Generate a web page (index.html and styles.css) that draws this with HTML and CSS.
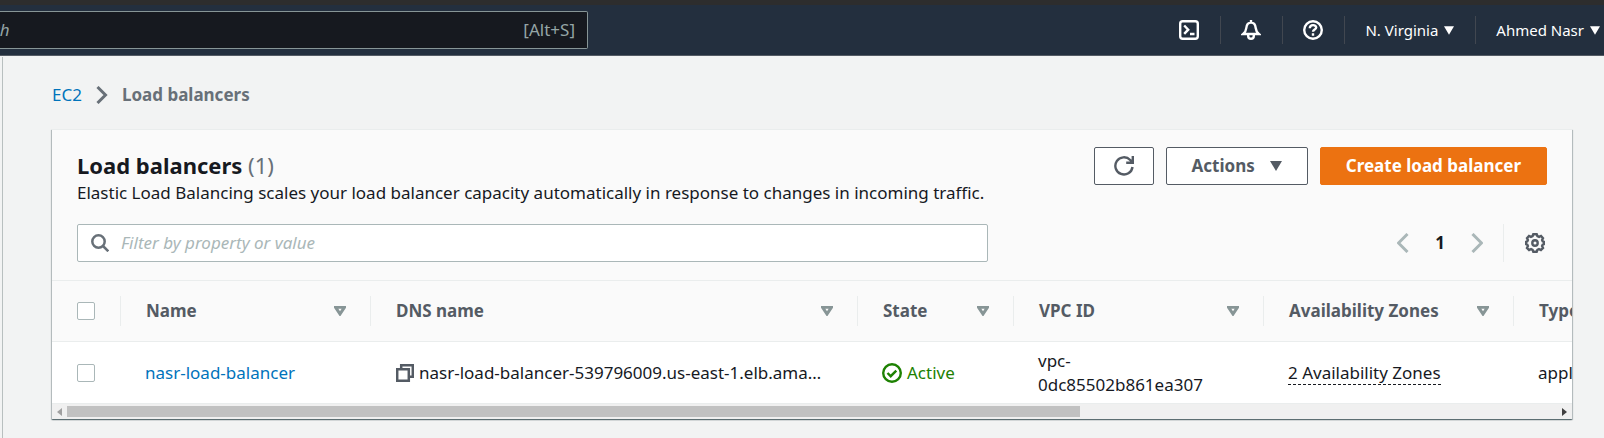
FILE: index.html
```html
<!DOCTYPE html>
<html lang="en">
<head>
<meta charset="utf-8">
<title>Load balancers</title>
<link rel="stylesheet" href="styles.css">
</head>
<body>
<header class="topnav">
  <div class="search">
    <input class="search-input" type="text" aria-label="Search" placeholder="Search">
    <span class="search-hint">[Alt+S]</span>
  </div>
  <nav class="tools" aria-label="Account">
    <button class="tool" type="button" aria-label="CloudShell">
      <svg class="icon bold" viewBox="0 0 20 20"><rect x="1.200" y="1.200" width="17.600" height="17.600" rx="2.500"/><path d="M5.200 5.500l4 4.200-4 4.200M11 14h4.500"/></svg>
    </button>
    <button class="tool" type="button" aria-label="Notifications">
      <svg class="icon bold" viewBox="0 0 20 20"><path d="M10 0v2M2.200 14h15.600c-2.200-1.800-2.800-3.300-3.100-6C14.400 4.800 13 2.600 10 2.600S5.600 4.800 5.300 8c-.3 2.700-.9 4.200-3.100 6zM7.200 15v1a2.800 2.800 0 0 0 5.600 0v-1"/></svg>
    </button>
    <button class="tool" type="button" aria-label="Help">
      <svg class="icon bold" viewBox="0 0 20 20"><circle cx="10" cy="10" r="8.800"/><path d="M6.800 8.200c0-4 6.400-4 6.400-.6 0 2-3.200 2-3.200 4.200M10 13.300v2.400"/></svg>
    </button>
    <button class="tool menu" type="button">N. Virginia <svg class="caret" viewBox="0 0 12 10"><path d="M0 0h12L6 10z"/></svg></button>
    <button class="tool menu last" type="button">Ahmed Nasr <svg class="caret" viewBox="0 0 12 10"><path d="M0 0h12L6 10z"/></svg></button>
  </nav>
</header>
<div class="shell">
  <aside class="rail"></aside>
  <main class="content">
    <nav class="crumbs" aria-label="Breadcrumbs">
      <a class="link" href="#">EC2</a>
      <svg class="crumb-sep" viewBox="0 0 12 18"><path d="M1.500 1l8 8-8 8"/></svg>
      <span class="crumb-current">Load balancers</span>
    </nav>
    <section class="panel">
      <div class="panel-head">
        <div class="title-row">
          <div class="heading">
            <h1 class="title">Load balancers <span class="count">(1)</span></h1>
            <p class="desc">Elastic Load Balancing scales your load balancer capacity automatically in response to changes in incoming traffic.</p>
          </div>
          <div class="actions">
            <button class="btn refresh" type="button" aria-label="Refresh"><svg class="icon bold" viewBox="0 0 20 20"><path d="M18.500 11a8.600 8.600 0 1 1-2.300-7l2.300 2.400M18.800 0v6.800h-6.600"/></svg></button>
            <button class="btn" type="button">Actions <svg class="caret" viewBox="0 0 12 10"><path d="M0 0h12L6 10z"/></svg></button>
            <button class="btn primary" type="button">Create load balancer</button>
          </div>
        </div>
        <div class="filter-row">
          <div class="filter">
            <svg class="icon small" viewBox="0 0 18 18"><circle cx="7.500" cy="7.500" r="6.200"/><path d="M12 12l5.300 5.300"/></svg>
            <input class="filter-input" type="text" aria-label="Filter" placeholder="Filter by property or value">
          </div>
          <div class="pager">
            <button class="page-arrow" type="button" aria-label="Previous page"><svg class="arrow" viewBox="0 0 12 20"><path d="M10.500 1l-9 9 9 9"/></svg></button>
            <button class="page" type="button">1</button>
            <button class="page-arrow" type="button" aria-label="Next page"><svg class="arrow" viewBox="0 0 12 20"><path d="M1.500 1l9 9-9 9"/></svg></button>
            <button class="settings" type="button" aria-label="Preferences"><svg class="icon bold" viewBox="0 0 20 20"><path d="M8.300 1.200h3.400l.7 1.800 1.700.8 1.900-.9 2 2.200-.9 1.900.6 1.300 1.100.5v2.400l-1.100.5-.6 1.400.9 1.900-2.100 2-1.900-.9-1.600.8-.7 1.900H8.300l-.7-1.900-1.600-.8-1.900.9-2.100-2 .9-1.900-.6-1.400-1.100-.5V8.800l1.100-.5.6-1.300L2 5.100l2-2.200 1.900.9L7.600 3z"/><circle cx="10" cy="10" r="2.700"/></svg></button>
          </div>
        </div>
      </div>
      <div class="table-wrap">
        <table class="table">
          <colgroup><col class="c-check"><col class="c-name"><col class="c-dns"><col class="c-state"><col class="c-vpc"><col class="c-az"><col class="c-type"></colgroup>
          <thead>
            <tr>
              <th><div class="th"><input class="check" type="checkbox" aria-label="Select all"></div></th>
              <th><div class="th">Name <svg class="sort" viewBox="0 0 12 10"><path d="M1.500 1.200h9L6 8z"/></svg></div></th>
              <th><div class="th">DNS name <svg class="sort" viewBox="0 0 12 10"><path d="M1.500 1.200h9L6 8z"/></svg></div></th>
              <th><div class="th">State <svg class="sort" viewBox="0 0 12 10"><path d="M1.500 1.200h9L6 8z"/></svg></div></th>
              <th><div class="th">VPC ID <svg class="sort" viewBox="0 0 12 10"><path d="M1.500 1.200h9L6 8z"/></svg></div></th>
              <th><div class="th">Availability Zones <svg class="sort" viewBox="0 0 12 10"><path d="M1.500 1.200h9L6 8z"/></svg></div></th>
              <th><div class="th">Type</div></th>
            </tr>
          </thead>
          <tbody>
            <tr>
              <td class="pick"><input class="check" type="checkbox" aria-label="Select nasr-load-balancer"></td>
              <td><a class="link" href="#">nasr-load-balancer</a></td>
              <td class="dns-cell"><div class="dns"><svg class="icon small copy" viewBox="0 0 18 18"><path d="M1.200 5.200h11.600v11.600H1.200zM5.200 5V1.200h11.600v11.600H13"/></svg><span class="clip">nasr-load-balancer-539796009.us-east-1.elb.ama…</span></div></td>
              <td><div class="status"><svg class="icon bold" viewBox="0 0 20 20"><circle cx="10" cy="10" r="8.800"/><path d="M5.500 10l3.200 3.200 5.600-5.600"/></svg>Active</div></td>
              <td>vpc-<br>0dc85502b861ea307</td>
              <td><span class="zones">2 Availability Zones</span></td>
              <td>application</td>
            </tr>
          </tbody>
        </table>
      </div>
      <div class="scrollbar">
        <svg class="nub off" viewBox="0 0 6 8"><path d="M5 0v8L0 4z"/></svg>
        <div class="track"><div class="thumb"></div></div>
        <svg class="nub" viewBox="0 0 6 8"><path d="M1 0v8l5-4z"/></svg>
      </div>
    </section>
  </main>
</div>
</body>
</html>
```
FILE: styles.css
```css
* { box-sizing: border-box; }
body {
  margin: 0;
  min-height: 100vh;
  display: flex;
  flex-direction: column;
  overflow: hidden;
  background: #f2f3f3;
  color: #16191f;
  font: 17px/24px "Noto Sans", sans-serif;
}
button, input { font: inherit; color: inherit; margin: 0; }
button { cursor: pointer; }
svg { display: block; flex: none; fill: none; stroke: currentColor; stroke-width: 2; }
.icon { width: 20px; height: 20px; }
.bold { stroke-width: 2.400; }
.small { width: 18px; height: 18px; stroke-width: 2.500; }
.caret { width: 12px; height: 10px; fill: currentColor; stroke: none; }
.link { color: #0073bb; text-decoration: none; }

.topnav {
  display: flex;
  justify-content: space-between;
  align-items: center;
  height: 56px;
  border-top: 5px solid #2d2d2d;
  border-bottom: 1px solid #545b64;
  background: #232f3e;
}
.search {
  display: flex;
  align-items: center;
  width: 588px;
  height: 38px;
  padding-right: 12px;
  border: 1px solid #879596;
  border-left: 0;
  border-radius: 0 2px 2px 0;
  background: #16191f;
  color: #95a5a6;
}
.search-input { flex: 1; min-width: 0; margin-left: -41px; padding: 0; border: 0; background: none; outline: 0; }
.search-input::placeholder { color: #95a5a6; font-style: italic; opacity: 1; }
.tools { display: flex; align-items: center; color: #fff; }
.tool {
  display: flex;
  align-items: center;
  height: 28px;
  padding: 0 21px 0 20px;
  border: 0;
  border-right: 1px solid #414750;
  background: none;
}
.menu { gap: 6px; font-size: 15px; }
.menu .caret { width: 10px; height: 9px; }
.last { gap: 6px; padding-right: 4px; border-right: 0; }

.shell { display: flex; flex: 1; }
.rail { width: 3px; margin-top: 1px; border-right: 1px solid #b8bfbf; }
.content { flex: 1; min-width: 0; padding: 27px 32px 19px 49px; }
.crumbs { display: flex; align-items: center; gap: 14px; margin-bottom: 22px; color: #687078; }
.crumb-sep { width: 12px; height: 18px; stroke-width: 3; }
.crumb-current { font-weight: 700; }

.panel {
  background: #fafafa;
  border-top: 1px solid #eaeded;
  box-shadow: 0 1px 1px rgba(0, 28, 36, 0.4), 1px 1px 1px rgba(0, 28, 36, 0.2), -1px 1px 1px rgba(0, 28, 36, 0.2);
}
.panel-head { padding: 17px 25px 18px; }
.title-row { display: flex; justify-content: space-between; align-items: flex-start; gap: 20px; }
.heading { padding-top: 3px; }
.title { margin: 0; font-size: 22px; line-height: 30px; }
.count { font-weight: 400; color: #687078; }
.desc { margin: 0; line-height: 26px; }
.actions { display: flex; gap: 12px; }
.btn {
  display: flex;
  align-items: center;
  gap: 15px;
  height: 38px;
  padding: 0 25px;
  border: 1px solid #545b64;
  border-radius: 2px;
  background: #fff;
  color: #545b64;
  font-weight: 700;
  white-space: nowrap;
}
.refresh { padding: 0 19px; }
.primary { border-color: #ec7211; background: #ec7211; color: #fff; }
.filter-row { display: flex; justify-content: space-between; align-items: center; margin-top: 18px; }
.filter {
  display: flex;
  align-items: center;
  gap: 12px;
  width: 62%;
  height: 38px;
  padding: 0 13px;
  border: 1px solid #aab7b8;
  border-radius: 2px;
  background: #fff;
  color: #687078;
}
.filter-input { flex: 1; min-width: 0; padding: 0; border: 0; outline: 0; background: none; }
.filter-input::placeholder { color: #aab7b8; font-style: italic; opacity: 1; }
.pager { display: flex; align-items: center; color: #16191f; }
.page-arrow, .page, .settings { display: flex; align-items: center; border: 0; background: none; padding: 0; }
.page-arrow { color: #aab7b8; }
.arrow { width: 12px; height: 20px; stroke-width: 3; }
.page { padding: 0 26px; font-weight: 700; }
.settings { height: 38px; margin-left: 20px; padding: 0 2px 0 21px; border-left: 1px solid #eaeded; color: #545b64; }

.table-wrap { overflow: hidden; }
.table { width: 2247px; table-layout: fixed; border-collapse: separate; border-spacing: 0; }
.c-check { width: 69px; }
.c-name { width: 250px; }
.c-dns { width: 487px; }
.c-state { width: 156px; }
.c-vpc { width: 250px; }
.c-az { width: 250px; }
.table th { padding: 15px 0; border-top: 1px solid #eaeded; border-bottom: 1px solid #eaeded; text-align: left; color: #545b64; }
.th { display: flex; align-items: center; justify-content: space-between; height: 30px; padding: 0 24px 0 25px; border-right: 1px solid #eaeded; line-height: 26px; }
.sort { width: 12px; height: 10px; color: #879596; stroke-width: 3; }
.table td { height: 62px; padding: 0 24px; border-bottom: 1px solid #eaeded; background: #fff; }
.table .pick, .table .dns-cell { padding-left: 25px; }
.check { display: block; appearance: none; width: 18px; height: 18px; border: 1px solid #aab7b8; border-radius: 2px; background: #fff; }
.dns, .status { display: flex; align-items: center; gap: 5px; }
.copy { color: #545b64; }
.clip { white-space: nowrap; }
.status { color: #1d8102; }
.zones { border-bottom: 1px dashed #16191f; }

.scrollbar { display: flex; align-items: center; gap: 4px; height: 15px; padding: 0 5px; background: #f0f0f0; color: #404040; }
.nub { width: 6px; height: 8px; fill: currentColor; stroke: none; }
.off { color: #a0a0a0; }
.track { flex: 1; }
.thumb { width: 68%; height: 11px; background: #c1c1c1; }
```
